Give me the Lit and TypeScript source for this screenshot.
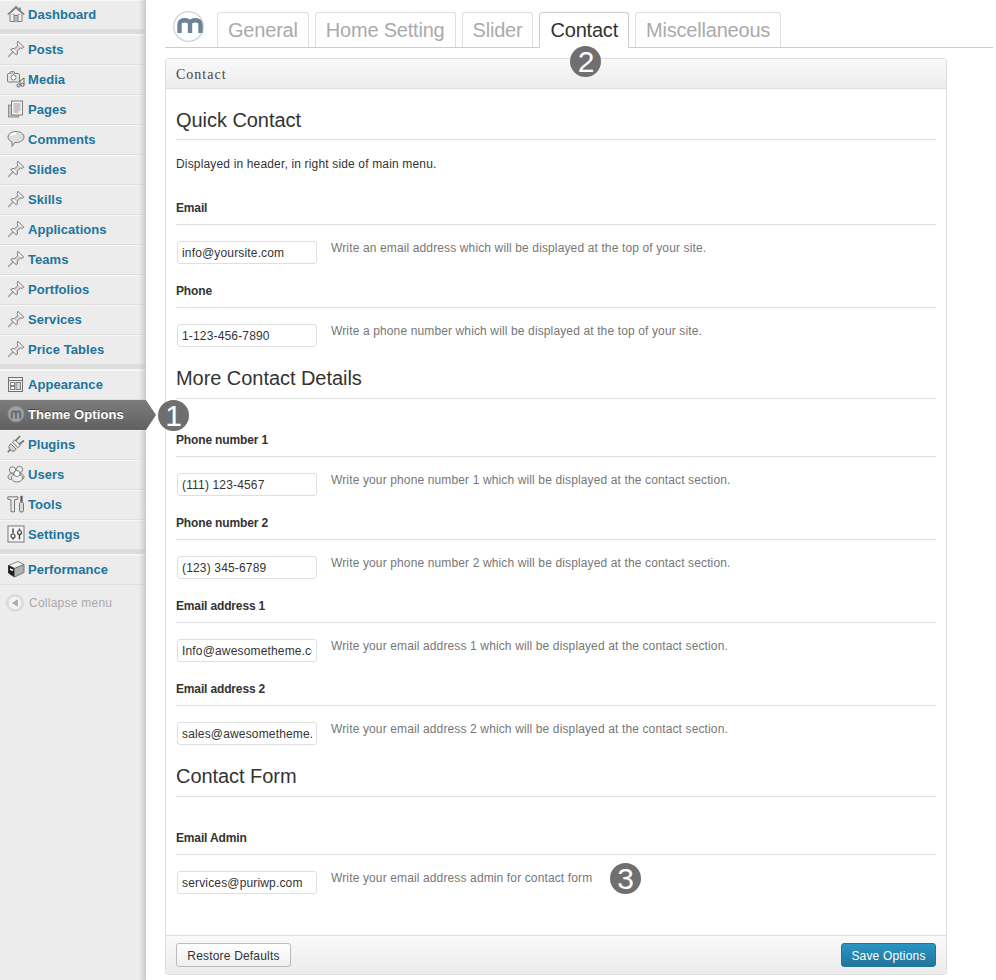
import { LitElement, html, css, svg } from "lit";
import { customElement } from "lit/decorators.js";

const pin = svg`<path d="M10.800 1.200l6 6-1.500 1.200-2-.5-3 3.200.2 2.800-1.200 1L3.800 9.800l1-1.200 2.800.1 3.200-3-.6-2.300z" fill="#d6d6d6" stroke="#7f7f7f"/><path d="M11 3.400l3.500 3.500M6 9.500l3 3" stroke="#fff" stroke-width="1.200"/><path d="M6.400 11.600L1 17" stroke="#a0a0a0" stroke-width="1.400"/>`;

const ICONS: Record<string, unknown> = {
  pin,
  home: svg`<path d="M.8 9.500L9 1.800l8.200 7.700" fill="none" stroke="#7f7f7f" stroke-width="1.500"/><path d="M3 8.500V16.500h12V8.500L9 3.200z" fill="#eee" stroke="#7f7f7f"/><path d="M7 16.500v-6h4v6" fill="#bdbdbd" stroke="#7f7f7f"/><path d="M5.500 9.500h2M10.500 9.500h2" stroke="#999"/><path d="M13 2.500v3.500" stroke="#7f7f7f" stroke-width="1.600"/>`,
  media: svg`<rect x=".5" y="3.500" width="12" height="8.500" rx="1" fill="#e6e6e6" stroke="#7f7f7f"/><path d="M2.500 3.500l1-1.800h3.500l1 1.800" fill="#ddd" stroke="#7f7f7f"/><circle cx="6.500" cy="7.500" r="2.500" fill="#fff" stroke="#7f7f7f"/><path d="M13 11v4.500M17 8v6.500M13 11l4-3" stroke="#666" fill="none"/><circle cx="11.500" cy="15.500" r="1.600" fill="#ddd" stroke="#666"/><circle cx="15.500" cy="14.800" r="1.600" fill="#ddd" stroke="#666"/>`,
  pages: svg`<rect x="1.500" y="5" width="10" height="12" fill="#c4c4c4" stroke="#8f8f8f"/><rect x="4.500" y="1" width="11" height="14" fill="#f2f2f2" stroke="#7f7f7f"/><path d="M6.500 4h7M6.500 6h7M6.500 8h7M6.500 10h7M6.500 12h5" stroke="#999"/>`,
  comment: svg`<path d="M9 1.500c4.400 0 8 2.300 8 5.500s-3.600 5.500-8 5.500H7.800L5 16.500V12C2.600 11 1 9.200 1 7c0-3.200 3.600-5.500 8-5.500z" fill="#dedede" stroke="#7f7f7f"/><path d="M3.500 5.500c1-1.200 3.200-2 5.500-2" fill="none" stroke="#fff" stroke-width="1.800"/>`,
  appearance: svg`<rect x="1.500" y="2.500" width="14" height="14" fill="#f0f0f0" stroke="#6f6f6f"/><path d="M1.500 5.500h14" stroke="#6f6f6f"/><rect x="3.500" y="7.500" width="4" height="3" fill="#fff" stroke="#7f7f7f"/><rect x="3.500" y="11.500" width="4" height="3" fill="#fff" stroke="#7f7f7f"/><rect x="9" y="7.500" width="4.500" height="7" fill="#d4d4d4" stroke="#7f7f7f"/>`,
  theme: svg`<circle cx="9" cy="9" r="8" fill="#a2a2a2" stroke="#8a8a8a"/><path d="M4.800 13.500V8.500c0-2.800 4.200-2.800 4.200 0V13.500M9 8.500c0-2.800 4.200-2.800 4.200 0V13.500" fill="none" stroke="#5f6f7c" stroke-width="2.200"/>`,
  plugin: svg`<path d="M.8 17.200l3.500-3.500" stroke="#7f7f7f" stroke-width="1.800"/><path d="M3.800 8.800l5.500 5.500-2 1.700c-1.800.7-3.300-.4-4.200-1.400C2 13.500 1.500 12 2.500 10.300z" fill="#d4d4d4" stroke="#777"/><path d="M5.500 7L8 4.800l5.300 5.300-2.300 2.700z" fill="#eee" stroke="#777"/><path d="M8.500 6l4.500-5M12 9.500L17 5.500" stroke="#777" stroke-width="1.800"/>`,
  users: svg`<circle cx="5.500" cy="5" r="3.200" fill="#eee" stroke="#7f7f7f"/><circle cx="12.500" cy="4.500" r="3.200" fill="#eee" stroke="#7f7f7f"/><path d="M1 12c0-2.500 2-3.500 4.500-3.500h7c2.700 0 4.500 1.200 4.500 3.500s-2 2.500-4 2.500H5c-2 0-4 0-4-2.500z" fill="#dcdcdc" stroke="#7f7f7f"/><ellipse cx="10" cy="13" rx="5.500" ry="4" fill="#efefef" stroke="#7f7f7f"/><circle cx="10" cy="8.500" r="3" fill="#fff" stroke="#7f7f7f"/>`,
  tools: svg`<path d="M.8 1.800h10v2.400l-3.300.6v12h-3.500v-12L.8 4.200z" fill="#eaeaea" stroke="#777"/><path d="M14.500.8v6" stroke="#555" stroke-width="2.200"/><rect x="12.500" y="7" width="4" height="10" rx="1.500" fill="#d8d8d8" stroke="#777"/>`,
  settings: svg`<rect x="1" y="1" width="16" height="16" fill="#f6f6f6" stroke="#777"/><path d="M6 3.500v5M12.500 3.500v2M12.500 9.500v5" stroke="#444" stroke-width="1.400"/><circle cx="6" cy="11" r="2" fill="none" stroke="#444" stroke-width="1.200"/><circle cx="12.500" cy="7.500" r="2" fill="none" stroke="#444" stroke-width="1.200"/><path d="M6 13v1.800" stroke="#444" stroke-width="1.400"/>`,
  performance: svg`<path d="M1.500 5.500L11 1.500l6 3-9.500 4z" fill="#f2f2f2" stroke="#888"/><path d="M1.500 5.500l6 3V17l-6-4z" fill="#1e1e1e" stroke="#333"/><path d="M7.500 8.500l9.500-4v8l-9.500 4.500z" fill="#b0b0b0" stroke="#777"/><path d="M3 9l3 1.500" stroke="#fff" stroke-width="1.500"/>`,
  collapse: svg`<circle cx="9" cy="9" r="8.300" fill="#dedede" stroke="#d4d4d4"/><circle cx="9" cy="9" r="6.200" fill="#f2f2f2"/><path d="M11.800 5.200v7.600L6 9z" fill="#aaa"/>`,
};

function icon(name: string) {
  return html`<svg class="ic" viewBox="0 0 18 18" width="18" height="18">${ICONS[name]}</svg>`;
}

type MenuItem = { label: string; icon: string; active?: boolean };
const MENU: (MenuItem | null)[] = [
  { label: "Dashboard", icon: "home" },
  null,
  { label: "Posts", icon: "pin" },
  { label: "Media", icon: "media" },
  { label: "Pages", icon: "pages" },
  { label: "Comments", icon: "comment" },
  { label: "Slides", icon: "pin" },
  { label: "Skills", icon: "pin" },
  { label: "Applications", icon: "pin" },
  { label: "Teams", icon: "pin" },
  { label: "Portfolios", icon: "pin" },
  { label: "Services", icon: "pin" },
  { label: "Price Tables", icon: "pin" },
  null,
  { label: "Appearance", icon: "appearance" },
  { label: "Theme Options", icon: "theme", active: true },
  { label: "Plugins", icon: "plugin" },
  { label: "Users", icon: "users" },
  { label: "Tools", icon: "tools" },
  { label: "Settings", icon: "settings" },
  null,
  { label: "Performance", icon: "performance" },
];

const TABS = ["General", "Home Setting", "Slider", "Contact", "Miscellaneous"];

type Field = { label: string; value: string; desc: string; badge?: string };
type Section = { title: string; intro?: string; fields: Field[] };
const SECTIONS: Section[] = [
  {
    title: "Quick Contact",
    intro: "Displayed in header, in right side of main menu.",
    fields: [
      { label: "Email", value: "info@yoursite.com", desc: "Write an email address which will be displayed at the top of your site." },
      { label: "Phone", value: "1-123-456-7890", desc: "Write a phone number which will be displayed at the top of your site." },
    ],
  },
  {
    title: "More Contact Details",
    fields: [
      { label: "Phone number 1", value: "(111) 123-4567", desc: "Write your phone number 1 which will be displayed at the contact section." },
      { label: "Phone number 2", value: "(123) 345-6789", desc: "Write your phone number 2 which will be displayed at the contact section." },
      { label: "Email address 1", value: "Info@awesometheme.com", desc: "Write your email address 1 which will be displayed at the contact section." },
      { label: "Email address 2", value: "sales@awesometheme.com", desc: "Write your email address 2 which will be displayed at the contact section." },
    ],
  },
  {
    title: "Contact Form",
    fields: [
      { label: "Email Admin", value: "services@puriwp.com", desc: "Write your email address admin for contact form", badge: "3" },
    ],
  },
];

@customElement("app-root")
export class AppRoot extends LitElement {
  static styles = css`
    :host {
      display: block;
      width: 996px;
      height: 980px;
      overflow: hidden;
      background: #fff;
      font-family: "Liberation Sans", Arial, sans-serif;
      color: #333;
    }
    .root { display: flex; height: 980px; }

    .side {
      position: relative;
      flex: 0 0 146px;
      box-sizing: border-box;
      background: #ececec;
    }
    .side::after {
      content: "";
      position: absolute;
      top: 0;
      right: 0;
      bottom: 0;
      width: 7px;
      background: linear-gradient(to right, rgba(190,190,190,0), rgba(190,190,190,.75));
    }
    .item {
      position: relative;
      box-sizing: border-box;
      height: 30px;
      display: flex;
      align-items: center;
      gap: 3px;
      padding: 0 0 2px 7px;
      border-top: 1px solid #f6f6f6;
      border-bottom: 1px solid #dfdfdf;
      font-size: 13px;
      font-weight: bold;
      color: #21759b;
      letter-spacing: 0.05px;
    }
    .ic { flex: none; display: block; }
    .item.active {
      z-index: 1;
      border: 0;
      color: #fff;
      letter-spacing: 0.1px;
      background: linear-gradient(to bottom, #7d7d7d, #606060);
      text-shadow: 0 -1px 0 #444;
    }
    .item.active::after {
      content: "";
      position: absolute;
      left: 100%;
      top: 0;
      width: 10px;
      height: 30px;
      background: linear-gradient(to bottom, #7d7d7d, #606060);
      clip-path: polygon(0 0, 100% 50%, 0 100%);
    }
    .sep {
      box-sizing: border-box;
      height: 5px;
      background: #dcdcdc;
      border-bottom: 1px solid #f6f6f6;
    }
    .collapse {
      display: flex;
      align-items: center;
      gap: 5px;
      padding: 9px 0 0 6px;
      font-size: 12px;
      color: #aaa;
      letter-spacing: 0.25px;
    }

    .badge {
      position: absolute;
      width: 31px;
      height: 31px;
      border-radius: 50%;
      background: #6f6f6f;
      color: #fff;
      font-size: 30px;
      font-weight: normal;
      line-height: 31px;
      text-align: center;
      letter-spacing: 0;
      text-shadow: none;
      z-index: 2;
    }
    .badge.b1 { left: 158px; top: 0; }
    .badge.b2 { left: 30px; top: 33px; }
    .badge.b3 { left: 434px; top: -6px; }

    .main { flex: 1; min-width: 0; padding-left: 19px; }
    .tabs {
      display: flex;
      align-items: flex-start;
      gap: 6px;
      box-sizing: border-box;
      height: 48px;
      margin-right: 3px;
      padding: 12px 0 0 8px;
      border-bottom: 1px solid #ccc;
    }
    .logo { flex: none; display: block; margin: -1px 7px 0 0; }
    .tab {
      position: relative;
      box-sizing: border-box;
      height: 35px;
      padding: 0 10px;
      border: 1px solid #dfdfdf;
      border-bottom: 0;
      border-radius: 3px 3px 0 0;
      font-size: 20px;
      line-height: 34px;
      letter-spacing: -0.2px;
      color: #aaa;
      white-space: nowrap;
    }
    .tab.active {
      height: 36px;
      background: #fff;
      border-color: #ccc;
      color: #333;
    }

    .panel {
      box-sizing: border-box;
      width: 782px;
      height: 917px;
      margin-top: 10px;
      display: flex;
      flex-direction: column;
      border: 1px solid #dfdfdf;
      border-radius: 3px;
    }
    .head {
      box-sizing: border-box;
      flex: none;
      height: 30px;
      padding: 1px 0 0 10px;
      background: linear-gradient(to bottom, #f9f9f9, #ececec);
      border-bottom: 1px solid #dfdfdf;
      font-family: "Liberation Serif", "Times New Roman", serif;
      font-size: 14px;
      line-height: 30px;
      letter-spacing: 1px;
      color: #464646;
    }
    .body { flex: 1; padding: 0 10px; }
    h3 {
      margin: 19px 0 0;
      padding-bottom: 8px;
      border-bottom: 1px solid #dfdfdf;
      font-size: 20px;
      font-weight: normal;
      line-height: 24px;
      color: #333;
      letter-spacing: -0.05px;
    }
    h3:first-child { padding-bottom: 7px; }
    .intro {
      margin: 16px 0 0;
      font-size: 12px;
      line-height: 16px;
      color: #333;
      letter-spacing: 0.16px;
    }
    h3 + .field { margin-top: 32px; }
    .field + .field { margin-top: 18px; }
    .intro + .field { margin-top: 27px; }
    .label {
      padding: 1px 0 8px;
      border-bottom: 1px solid #dfdfdf;
      font-size: 12px;
      font-weight: bold;
      line-height: 16px;
      color: #333;
      letter-spacing: -0.15px;
    }
    .row {
      position: relative;
      display: flex;
      align-items: flex-start;
      gap: 14px;
      margin-top: 14px;
      padding-left: 1px;
    }
    input {
      box-sizing: border-box;
      flex: none;
      width: 140px;
      height: 23px;
      margin: 2px 0 0;
      padding: 0 4px;
      border: 1px solid #dfdfdf;
      border-radius: 3px;
      background: #fff;
      font: 12px "Liberation Sans", Arial, sans-serif;
      letter-spacing: 0.16px;
      color: #333;
      outline: none;
    }
    .desc {
      padding-top: 1px;
      font-size: 12px;
      line-height: 16px;
      color: #777;
      letter-spacing: 0.13px;
      white-space: nowrap;
    }
    .foot {
      box-sizing: border-box;
      flex: none;
      height: 39px;
      display: flex;
      justify-content: space-between;
      align-items: flex-start;
      padding: 7px 10px 0;
      background: linear-gradient(to bottom, #f9f9f9, #ececec);
      border-top: 1px solid #dfdfdf;
    }
    .btn {
      box-sizing: border-box;
      height: 24px;
      border-radius: 3px;
      font: 12px "Liberation Sans", Arial, sans-serif;
      letter-spacing: 0.18px;
      padding: 1px 0 0;
    }
    .restore {
      width: 115px;
      border: 1px solid #bbb;
      background: linear-gradient(to bottom, #fff, #efefef);
      color: #333;
    }
    .save {
      width: 95px;
      border: 1px solid #21759b;
      background: linear-gradient(to bottom, #2a95c5, #21759b);
      color: #fff;
    }
  `;

  render() {
    return html`<div class="root">
      <nav class="side">
        ${MENU.map((m) =>
          m === null
            ? html`<div class="sep"></div>`
            : html`<div class="item ${m.active ? "active" : ""}">
                ${icon(m.icon)}<span>${m.label}</span>
                ${m.active ? html`<span class="badge b1">1</span>` : ""}
              </div>`
        )}
        <div class="collapse">${icon("collapse")}<span>Collapse menu</span></div>
      </nav>
      <main class="main">
        <div class="tabs">
          <svg class="logo" width="31" height="31" viewBox="0 0 31 31">
            <circle cx="15.5" cy="15.5" r="14.8" fill="#fff" stroke="#c9d5dd" stroke-width="1.300"/>
            <path d="M6.500 22V13c0-5 10.500-5 10.500 0V22M17 13c0-5 10.500-5 10.500 0V22" fill="none" stroke="#6c8499" stroke-width="4.400"/>
          </svg>
          ${TABS.map(
            (t) => html`<div class="tab ${t === "Contact" ? "active" : ""}">
              ${t}${t === "Contact" ? html`<span class="badge b2">2</span>` : ""}
            </div>`
          )}
        </div>
        <section class="panel">
          <div class="head">Contact</div>
          <div class="body">
            ${SECTIONS.map(
              (s) => html`<h3>${s.title}</h3>
                ${s.intro ? html`<p class="intro">${s.intro}</p>` : ""}
                ${s.fields.map(
                  (f) => html`<div class="field">
                    <div class="label">${f.label}</div>
                    <div class="row">
                      <input type="text" .value=${f.value} />
                      <span class="desc">${f.desc}</span>
                      ${f.badge ? html`<span class="badge b3">${f.badge}</span>` : ""}
                    </div>
                  </div>`
                )}`
            )}
          </div>
          <div class="foot">
            <button class="btn restore">Restore Defaults</button>
            <button class="btn save">Save Options</button>
          </div>
        </section>
      </main>
    </div>`;
  }
}
